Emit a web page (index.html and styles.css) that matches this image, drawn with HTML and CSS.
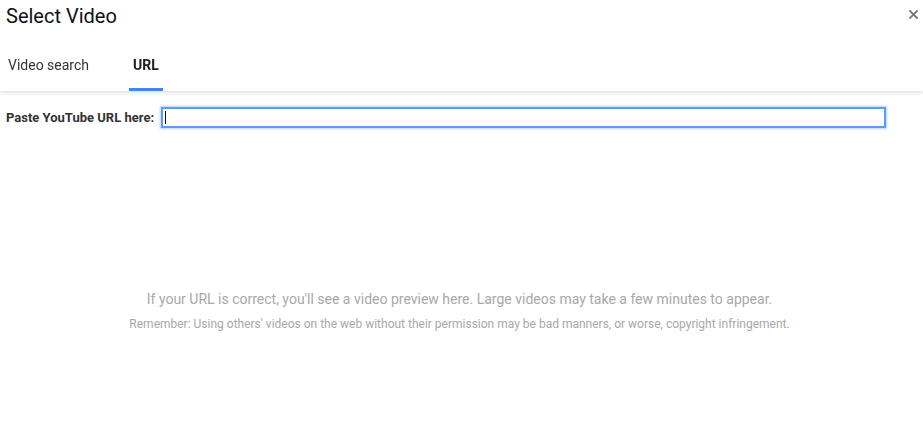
FILE: index.html
```html
<!DOCTYPE html>
<html lang="en">

<head>
    <meta charset="UTF-8">
    <meta name="viewport" content="width=device-width, initial-scale=1.0">
    <title>Select Video</title>
    <link rel="stylesheet" href="styles.css">
</head>

<body>
    <div class="dialog">
        <div class="dialog-header">
            <div class="title-row">
                <h1 class="dialog-title">Select Video</h1>
                <button class="close-button" aria-label="Close">
                    <svg width="9" height="9" viewBox="0 0 9 9" xmlns="http://www.w3.org/2000/svg">
                        <path d="M1 1L8 8M8 1L1 8" stroke="#777" stroke-width="1.8" stroke-linecap="square" />
                    </svg>
                </button>
            </div>

            <div class="tabs">
                <div class="tab">Video search</div>
                <div class="tab active">URL</div>
            </div>
        </div>

        <div class="url-form">
            <label class="url-label" for="url-input">Paste YouTube URL here:</label>
            <div class="input-wrap">
                <input type="text" id="url-input" class="url-input" autofocus>
            </div>
        </div>

        <div class="preview">
            <p class="preview-main">If your URL is correct, you'll see a video preview here. Large videos may take a few minutes to appear.</p>
            <p class="preview-note">Remember: Using others' videos on the web without their permission may be bad manners, or worse, copyright infringement.</p>
        </div>
    </div>
</body>

</html>
```

FILE: styles.css
```css
/* Reset and base styles */
* {
    margin: 0;
    padding: 0;
    box-sizing: border-box;
    font-family: Roboto, 'Liberation Sans', Arial, sans-serif;
}

body {
    background-color: white;
    color: #222;
}

.dialog {
    width: 923px;
    height: 448px;
    display: flex;
    flex-direction: column;
}

/* Header */
.dialog-header {
    height: 91px;
    box-shadow: 0 2px 4px rgba(0, 0, 0, 0.12);
    position: relative;
    z-index: 1;
}

.title-row {
    display: flex;
    justify-content: space-between;
    align-items: center;
    height: 32px;
    padding-left: 6px;
    padding-right: 5px;
}

.dialog-title {
    font-size: 20px;
    font-weight: 400;
    color: #111;
}

.close-button {
    border: none;
    background: none;
    width: 9px;
    height: 9px;
    display: flex;
    margin-top: -4px;
    cursor: pointer;
}

.tabs {
    display: flex;
    gap: 36px;
    padding-left: 4px;
    margin-top: 17px;
}

.tab {
    font-size: 14px;
    color: #333;
    padding: 8px 4px 0;
    height: 42px;
    border-bottom: 3px solid transparent;
    cursor: pointer;
}

.tab.active {
    font-weight: 700;
    color: #222;
    border-bottom-color: #4285f4;
}

/* URL form */
.url-form {
    display: flex;
    align-items: center;
    gap: 7px;
    padding: 16px 37px 0 6px;
}

.url-label {
    font-size: 13px;
    font-weight: 700;
    color: #333;
}

.input-wrap {
    flex: 1;
    display: flex;
    position: relative;
}

/* blinking caret as captured */
.input-wrap::after {
    content: "";
    position: absolute;
    left: 4px;
    top: 4px;
    width: 1px;
    height: 13px;
    background-color: #111;
}

.url-input {
    flex: 1;
    height: 21px;
    border: 2px solid #5b9dee;
    box-shadow: 0 0 2px 1px rgba(91, 157, 238, 0.45);
    outline: none;
    font-size: 13px;
    padding: 0 2px;
    caret-color: transparent;
}

/* Preview message */
.preview {
    flex: 1;
    text-align: center;
    padding-top: 163px;
    padding-right: 4px;
    color: #a8a8a8;
}

.preview-main {
    font-size: 14px;
    margin-bottom: 10px;
}

.preview-note {
    font-size: 12px;
}
```
